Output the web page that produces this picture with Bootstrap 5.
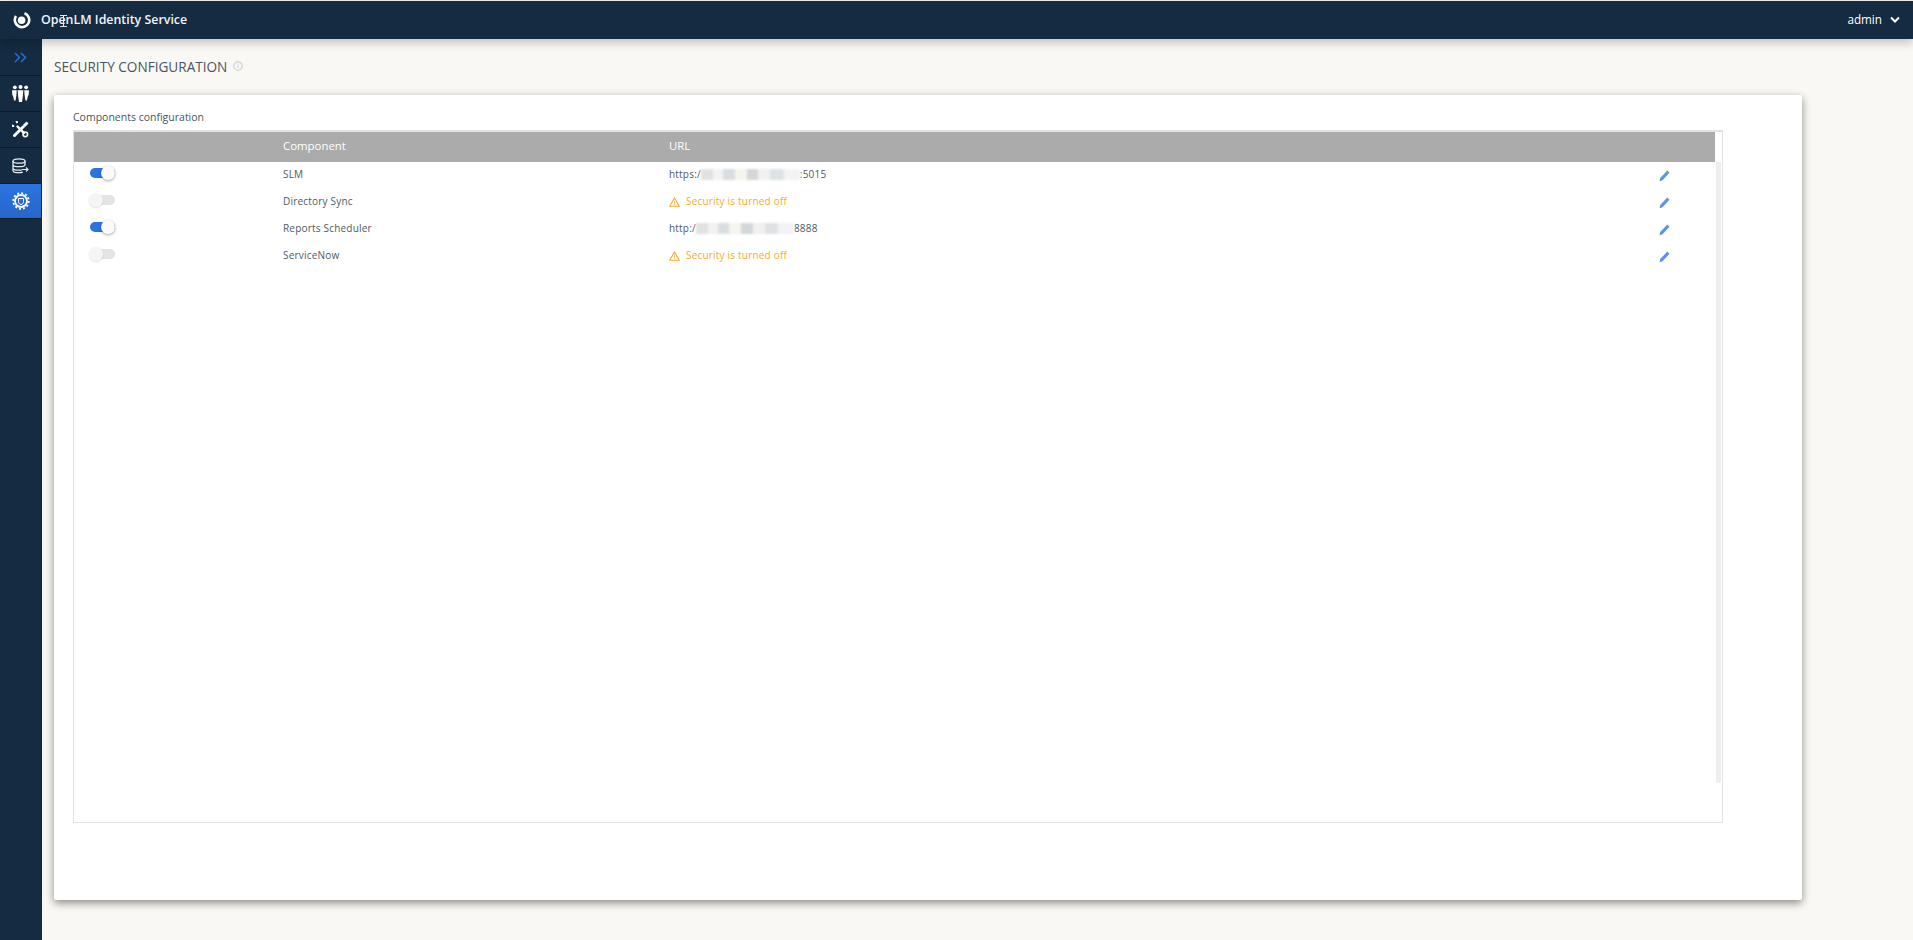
<!DOCTYPE html>
<html lang="en">
<head>
  <meta charset="UTF-8">
  <meta name="viewport" content="width=device-width, initial-scale=1">
  <title>OpenLM Identity Service</title>
  <link href="https://cdn.jsdelivr.net/npm/bootstrap@5.3.2/dist/css/bootstrap.min.css" rel="stylesheet">
  <style>
    html, body { height: 100%; overflow: hidden; }
    body {
      background: #f9f8f4;
      font-family: "Open Sans", "Liberation Sans", sans-serif;
      font-size: 10px;
      color: #4f5a65;
      padding-top: 1px;
    }
    .top-bar {
      height: 38px;
      background: #142b41;
      color: #fff;
      padding: 0 13px 0 13px;
      box-shadow: 0 3px 10px rgba(0, 0, 0, .25);
      position: relative;
      z-index: 2;
    }
    .brand-name { font-size: 12.4px; font-weight: 600; margin-left: 10px; color: #f2f4f6; }
    .user-name { font-size: 11.7px; font-weight: 400; }
    .text-cursor { position: absolute; left: 60px; top: 14px; }
    .shell { height: 901px; }
    .side-bar { width: 42px; background: #142b41; flex: none; }
    .side-item {
      width: 41px;
      height: 36px;
      border-bottom: 1px solid #0c1c2c;
    }
    .side-first { height: 37px; }
    .side-active { background: linear-gradient(180deg, #2b73e0, #2667c9); width: 41px; height: 35px; border-bottom: 1px solid #0c1c2c; }
    .page-main { padding: 17px 0 0 12px; }
    .page-title { font-size: 13.6px; font-weight: 400; color: #4a5560; line-height: 22px; margin: 0; height: 39px; }
    .info-dot { margin-left: 2px; vertical-align: 1px; }
    .sheet {
      width: 1748px;
      height: 805px;
      background: #fff;
      border-radius: 2px;
      padding: 12px 19px 0;
      box-shadow: 0 3px 8px rgba(0, 0, 0, .45);
    }
    .sheet-title { font-size: 10.5px; line-height: 20px; color: #4a5560; height: 23px; }
    .grid-box {
      width: 1650px;
      height: 693px;
      border: 1px solid #e2e2e2;
      border-top-width: 2px;
    }
    .grid-head {
      width: 1641px;
      height: 30px;
      padding-bottom: 2px;
      background: #ababab;
      color: #fff;
      font-size: 11.4px;
      font-weight: 400;
    }
    .cell-toggle { width: 209px; padding-left: 16px; flex: none; }
    .cell-name { width: 386px; flex: none; }
    .cell-url { width: 990px; flex: none; }
    .grid-body { height: 621px; }
    .grid-rows { width: 1642px; flex: none; margin-top: -1px; }
    .grid-row { height: 27px; letter-spacing: .2px; }
    .pencil-cell { padding-top: 2px; }
    .scroll-thumb { width: 5px; height: 621px; background: #eeeeee; margin-left: 0; border-radius: 0 0 2px 2px; }
    .switch-track {
      display: block;
      position: relative;
      top: -2px;
      width: 25px;
      height: 10px;
      border-radius: 5px;
      background: #e4e4e4;
    }
    .switch-on { background: #2b73e0; }
    .switch-knob {
      position: absolute;
      top: -2px;
      left: -1px;
      width: 14px;
      height: 14px;
      border-radius: 50%;
      background: #f5f5f5;
      box-shadow: 0 1px 2px rgba(0, 0, 0, .12);
    }
    .switch-on .switch-knob { left: 11px; background: #fafafa; box-shadow: 0 1px 3px rgba(0, 0, 0, .35); }
    .warn-text { color: #ffa726; }
    .warn-text svg { margin-right: 6px; }
    .masked {
      display: inline-block;
      height: 11px;
      vertical-align: -2px;
      filter: blur(1.2px);
      background: linear-gradient(90deg, #e2e2e2 0 12%, #f2f2f2 12% 22%, #dadde0 22% 34%, #f6f4ee 34% 46%, #d4d7da 46% 58%, #f0f0f0 58% 70%, #dfe2e4 70% 84%, #f3f3f3 84% 100%);
    }
    .mask-a { width: 99px; }
    .mask-b { width: 98px; }
  </style>
</head>
<body>

<nav class="top-bar d-flex align-items-center justify-content-between">
  <div class="d-flex align-items-center">
    <svg width="18" height="18" viewBox="0 0 18 18">
      <path d="M11.5 2.2A7.2 7.2 0 1 1 3 5" fill="none" stroke="#fff" stroke-width="2.6"/>
      <circle cx="8.6" cy="9.2" r="3.8" fill="#fff"/>
    </svg>
    <span class="brand-name">OpenLM Identity Service</span>
  </div>
  <div class="d-flex align-items-center gap-1">
    <span class="user-name">admin</span>
    <svg class="ms-1" width="10" height="7" viewBox="0 0 10 7"><path d="M1 1.5 5 5.5 9 1.5" fill="none" stroke="#fff" stroke-width="2"/></svg>
  </div>
  <svg class="text-cursor" width="7" height="12" viewBox="0 0 7 12"><path d="M0 .5h7M0 11.500h7M3.500 .5v11" stroke="#e8e8e8" stroke-width="1" fill="none"/></svg>
</nav>

<div class="shell d-flex">
  <aside class="side-bar">
    <div class="side-item side-first d-flex align-items-center justify-content-center">
      <svg width="13" height="11" viewBox="0 0 13 11"><path d="M1 1 5.500 5.500 1 10M7 1l4.500 4.500L7 10" fill="none" stroke="#2b73e0" stroke-width="1.400"/></svg>
    </div>
    <div class="side-item d-flex align-items-center justify-content-center">
      <svg width="17" height="17" viewBox="0 0 18 18" fill="#fff">
        <circle cx="3" cy="2.500" r="2"/><circle cx="9" cy="2.200" r="2.100"/><circle cx="15" cy="2.500" r="2"/>
        <path d="M0 5.500h5l-.4 6-.8 5H2.200L1 11H.4zM6 5.500h6l-.5 6.500-.9 6H7.400l-.9-6zM13 5.500h5l-.4 5.500H17l-1.200 5.500h-1.600l-.8-5z"/>
      </svg>
    </div>
    <div class="side-item d-flex align-items-center justify-content-center">
      <svg width="17" height="17" viewBox="0 0 17 17" fill="none" stroke="#fff" stroke-linecap="round">
        <path d="M2.500 14.500 10.500 6.500" stroke-width="3"/>
        <path d="M11 4.500 14.500 1 16 2.500 12.500 6z" fill="#fff" stroke-width="1"/>
        <path d="M5.500 5.500 12 12" stroke-width="2.400"/>
        <path d="M5 1.300A3.200 3.200 0 1 0 1.300 5" stroke-width="2"/>
        <circle cx="13.300" cy="13.300" r="2.300" stroke-width="1.600"/>
      </svg>
    </div>
    <div class="side-item d-flex align-items-center justify-content-center">
      <svg width="17" height="16" viewBox="0 0 17 16" fill="none" stroke="#e8ebee" stroke-width="1.300">
        <ellipse cx="7" cy="3" rx="6" ry="2.200"/>
        <path d="M1 3v9.500c0 1.300 2.700 2.200 6 2.200 1.500 0 2.800-.2 3.800-.5M13 3v4M1 6.500c0 1.300 2.700 2.200 6 2.200s6-.9 6-2.200M1 10c0 1.300 2.700 2.200 6 2.200 1 0 2-.1 2.800-.3"/>
        <path d="M10 11.500h6M14 9.500l2 2-2 2" stroke-width="1.100"/>
      </svg>
    </div>
    <div class="side-active d-flex align-items-center justify-content-center">
      <svg width="18" height="18" viewBox="0 0 18 18" fill="none" stroke="#fff">
        <circle cx="9" cy="9" r="6" stroke-width="1.800"/>
        <circle cx="9" cy="9" r="7.800" stroke-width="1.800" stroke-dasharray="2 2.080"/>
        <path d="M6.500 6.500h5v3.200c0 1.500-1.200 2.500-2.500 3-1.300-.5-2.500-1.500-2.500-3z" stroke-width="1"/>
      </svg>
    </div>
  </aside>

  <main class="page-main flex-grow-1">
    <h1 class="page-title">SECURITY CONFIGURATION
      <svg class="info-dot" width="10" height="10" viewBox="0 0 10 10" fill="none" stroke="#c4c4c4"><circle cx="5" cy="5" r="4.200"/><path d="M5 4.500v2.500M5 2.800v.9"/></svg>
    </h1>
    <section class="sheet">
      <div class="sheet-title">Components configuration</div>
      <div class="grid-box">
        <div class="grid-head d-flex align-items-center">
          <div class="cell-toggle"></div>
          <div class="cell-name">Component</div>
          <div class="cell-url">URL</div>
        </div>
        <div class="grid-body d-flex">
          <div class="grid-rows" id="rows"></div>
          <div class="scroll-thumb"></div>
        </div>
      </div>
    </section>
  </main>
</div>

<script src="https://cdn.jsdelivr.net/npm/bootstrap@5.3.2/dist/js/bootstrap.bundle.min.js"></script>
<script>
const warn = `<span class="warn-text"><svg width="11" height="10" viewBox="0 0 11 10" fill="none" stroke="#ffa726" stroke-width="1.100"><path d="M5.500 1 10.300 9.300H.7z"/><path d="M5.500 4v2.500M5.500 7.300v.8" stroke-width=".8"/></svg>Security is turned off</span>`
const pencil = `<svg width="11" height="12" viewBox="0 0 11 12"><path d="M8.300 .6 10.500 2.800 3.500 10.300.5 11.300l.7-3.200z" fill="#5b93ee"/></svg>`

const items = [
  { on: true, name: "SLM", url: `https:/<span class="masked mask-a"></span>:5015` },
  { on: false, name: "Directory Sync", url: warn },
  { on: true, name: "Reports Scheduler", url: `http:/<span class="masked mask-b"></span>8888` },
  { on: false, name: "ServiceNow", url: warn }
]

document.getElementById("rows").innerHTML = items.map(i => `
  <div class="grid-row d-flex align-items-center">
    <div class="cell-toggle"><span class="switch-track ${i.on ? "switch-on" : ""}"><span class="switch-knob"></span></span></div>
    <div class="cell-name">${i.name}</div>
    <div class="cell-url">${i.url}</div>
    <div class="pencil-cell">${pencil}</div>
  </div>`).join("")
</script>
</body>
</html>
